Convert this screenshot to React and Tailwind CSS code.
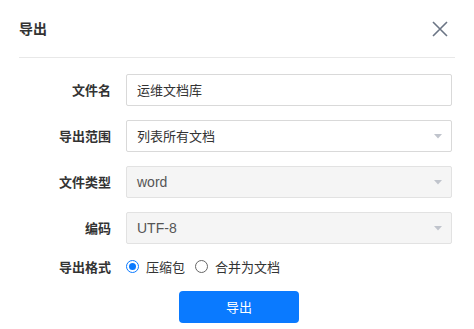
const CJK = "font-['Noto_Sans_CJK_SC','Noto_Sans',sans-serif]";
const LAT = "font-['Liberation_Sans','Noto_Sans_CJK_SC',sans-serif]";

function Caret() {
  return (
    <svg width="8" height="5" viewBox="0 0 8 5" className="shrink-0">
      <path d="M0 0 H8 L4 4.5 Z" fill="#c0c4cc" />
    </svg>
  );
}

function Row({ label, children }) {
  return (
    <div className="flex items-center">
      <div className={`w-[92px] text-right text-[13px] font-bold text-[#333] ${CJK}`}>{label}</div>
      <div className="ml-[15px] flex-1">{children}</div>
    </div>
  );
}

function Field({ value, select, disabled, latin }) {
  return (
    <div
      className={`flex h-8 items-center justify-between rounded-[2px] border pl-[10px] pr-[9px] ${
        disabled ? "border-[#e2e2e2] bg-[#f5f5f5] text-[#555]" : "border-[#d9d9d9] bg-white text-[#333]"
      }`}
    >
      <span className={`text-[13px] ${latin ? "text-[14px] " + LAT : CJK}`}>{value}</span>
      {select && <Caret />}
    </div>
  );
}

function Radio({ checked, label }) {
  return (
    <label className="flex items-center gap-[7px]">
      {checked ? (
        <span className="flex h-[13px] w-[13px] items-center justify-center rounded-full border-[1.5px] border-[#0a7aff]">
          <span className="h-[7px] w-[7px] rounded-full bg-[#0a7aff]" />
        </span>
      ) : (
        <span className="h-[13px] w-[13px] rounded-full border border-[#666]" />
      )}
      <span className={`text-[13px] text-[#333] ${CJK}`}>{label}</span>
    </label>
  );
}

export default function App() {
  return (
    <div className="h-[329px] w-[474px] bg-white px-[19px]">
      <header className="flex h-[58px] items-center justify-between border-b border-[#e8e8e8]">
        <h2 className={`text-[14px] font-bold text-[#333] ${CJK}`}>导出</h2>
        <svg width="16" height="16" viewBox="0 0 16 16" className="mr-[7px]">
          <path d="M1 1 L15 15 M15 1 L1 15" stroke="#6b7585" strokeWidth="1.6" />
        </svg>
      </header>

      <div className="flex flex-col gap-[14px] pr-[3px] pt-4">
        <Row label="文件名">
          <Field value="运维文档库" />
        </Row>
        <Row label="导出范围">
          <Field value="列表所有文档" select />
        </Row>
        <Row label="文件类型">
          <Field value="word" select disabled latin />
        </Row>
        <Row label="编码">
          <Field value="UTF-8" select disabled latin />
        </Row>
      </div>

      <div className="mt-[12px] flex h-[21px] items-center">
        <div className={`w-[92px] text-right text-[13px] font-bold text-[#333] ${CJK}`}>导出格式</div>
        <div className="ml-[15px] flex items-center gap-[10px]">
          <Radio checked label="压缩包" />
          <Radio label="合并为文档" />
        </div>
      </div>

      <div className="mt-[14px] flex justify-center pl-[4px]">
        <button
          type="button"
          className={`h-8 w-[120px] rounded-[4px] bg-[#0a7aff] text-[13px] text-white ${CJK}`}
        >
          导出
        </button>
      </div>
    </div>
  );
}
